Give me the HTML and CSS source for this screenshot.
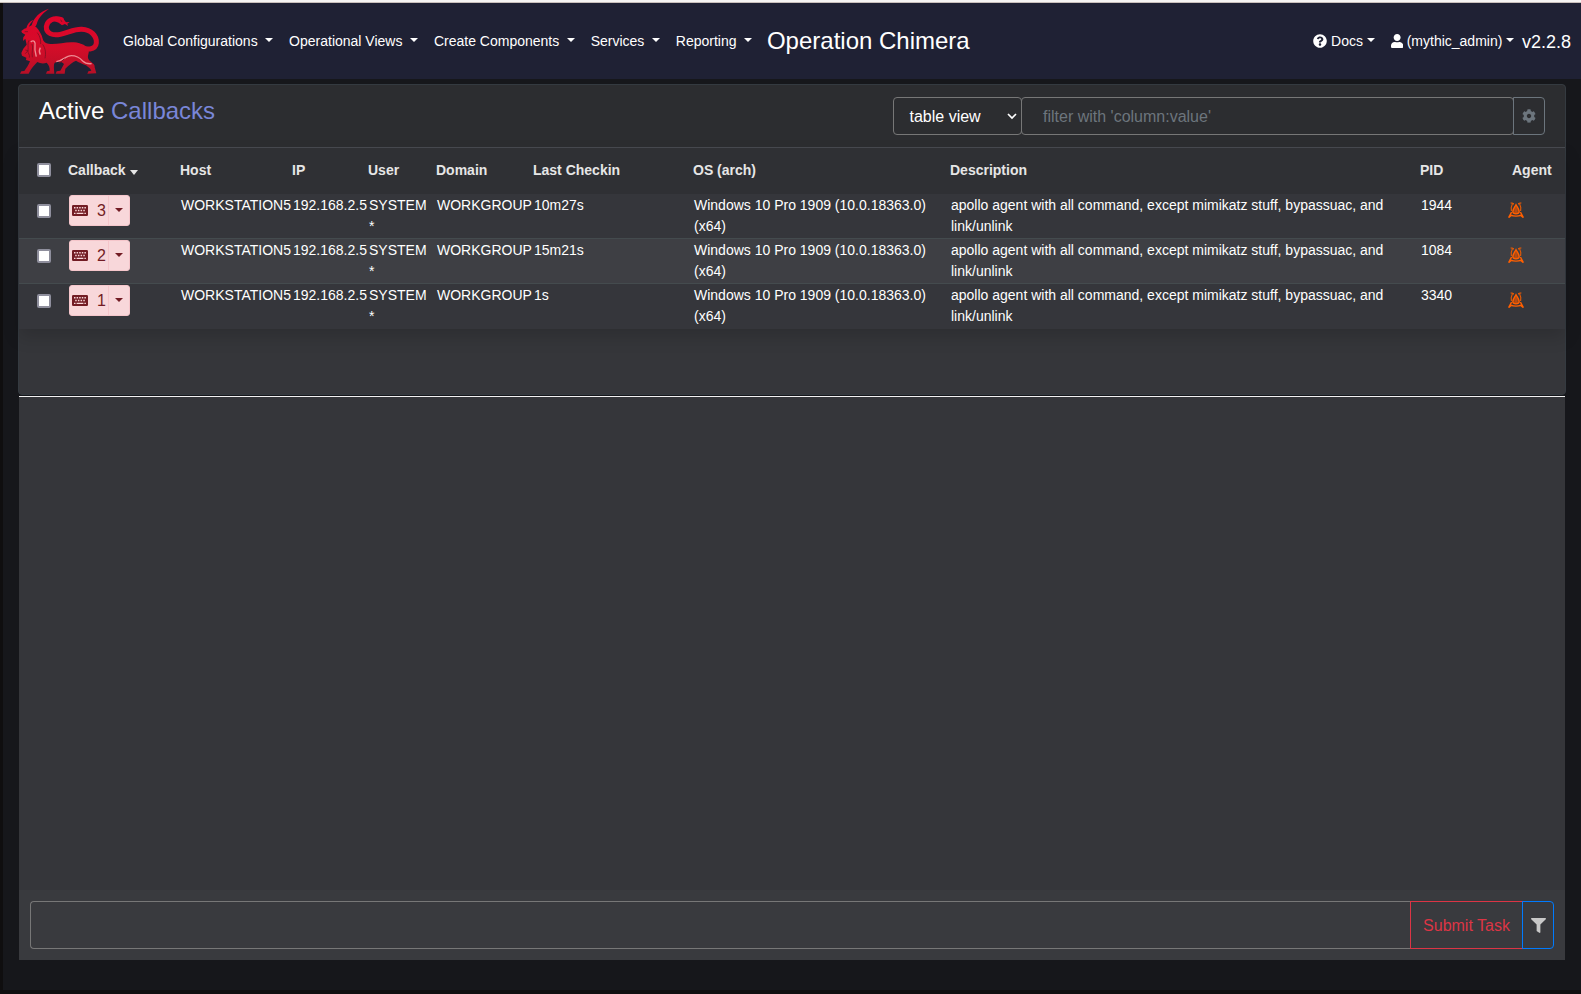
FILE: index.html
```html
<!DOCTYPE html>
<html lang="en">
<head>
<meta charset="utf-8">
<title>Operation Chimera</title>
<link rel="stylesheet" href="styles.css">
</head>
<body>
<svg class="defs" aria-hidden="true">
  <symbol id="keyboard" viewBox="0 0 16 11"><path fill-rule="evenodd" d="M1.2 0h13.6A1.2 1.2 0 0 1 16 1.2v8.6a1.2 1.2 0 0 1-1.200 1.200H1.200A1.200 1.200 0 0 1 0 9.800V1.200A1.200 1.200 0 0 1 1.200 0zM2 2v1.400h1.500V2zM4.600 2v1.400h1.500V2zM7.200 2v1.400h1.500V2zM9.800 2v1.400h1.500V2zM12.400 2v1.400h1.500V2zM3.200 4.800v1.400h1.500V4.800zM5.900 4.800v1.400h1.500V4.800zM8.600 4.800v1.400h1.500V4.800zM11.300 4.800v1.400h1.500V4.800zM2 7.700V9h1.500V7.700zM4.600 7.700V9h6.800V7.700zM12.400 7.700V9h1.500V7.700z"/></symbol>
  <symbol id="apollo" viewBox="0 0 16 16"><path class="lyre-fill" d="M8 3.500L5.300 9l.7 2.500h4l.7-2.500z"/><path class="lyre" d="M8 2.800C6.800 5 5.200 7.200 4.900 9.200 4.800 11 6 11.800 8 11.800s3.200-.8 3.100-2.600C10.800 7.200 9.200 5 8 2.800zM3.600 10L.6 15.600 3.500 13.200M12.400 10l3 5.600-2.900-2.400M3 13.300c2.500 1 7.500 1 10 0"/><path class="lyre-arm" d="M2.600 1h1.600v1.500L3.200 5.500 3.400 9M13.400 1h-1.600v1.500l1 3-.2 3.500M5.400 1v1.500M10.600 1v1.500"/><path class="lyre-thin" d="M8 4v7.500"/></symbol>
</svg>
<div class="page">
  <nav class="navbar">
    <svg class="logo" viewBox="60 24 240 201">
      <defs><linearGradient id="red" gradientUnits="userSpaceOnUse" x1="0" y1="24" x2="0" y2="225"><stop offset="0" stop-color="#e4002b"/><stop offset=".6" stop-color="#d30d29"/><stop offset="1" stop-color="#b50f26"/></linearGradient></defs>
      <path fill="url(#red)" d="M147 26C131 37 117 52 112 66c-2 7-4 13-9 16l-8-6C100 54 120 34 147 26zM100 60C89 64 81 74 79 86l7-2c2-9 7-16 14-24z"/>
      <path fill="url(#red)" d="M80 84L96 75L109 82C118 92 125 104 128 116C131 128 142 132 156 132C178 132 200 125 222 127C244 129 262 138 266 150C268 160 262 166 264 174C266 186 286 188 284 202L289 220L262 221L265 214L274 212C272 206 266 202 258 196C246 190 236 188 228 182C218 186 206 196 196 206L194 221H167L170 214L181 212L192 192C184 184 176 184 164 188C160 194 162 206 163 221H138L141 214L149 212C150 202 146 194 140 188C130 192 120 190 112 186C104 194 94 204 86 221H60L64 214L73 213C80 204 86 194 90 184L78 180L79 173L66 167L64 159L70 146L80 134L76 116L69 123L70 112L76 104L66 98L64 93L73 86z"/>
      <path class="tail" stroke="url(#red)" d="M184 59C162 52 142 60 139 80c-1 20 18 28 42 23 24-5 42-16 64-15 28 1 46 20 44 41-2 20-30 25-56 8"/>
      <path fill="url(#red)" d="M164 51c12-2 22 2 28 8l6 8 11-1-7 5 2 7-9-6-9 4-10-8-14-5z"/>
      <path class="shine" d="M92 126c10-8 15 0 13 12-2 12 2 24 4 32M121 143c-4 7-4 14 0 21M169 185c18-2 28-18 45-18 13 0 27 8 34 16 7 7 16 9 27 8"/>
      <path class="shade" d="M74 95l10 0M76 150l8 2-8 9M87 121c-6 10-1 20-3 29-2 11 7 13 4 23M96 132c5 11-2 25 1 40M112 98c8 10 11 22 10 34M128 133c9 13 10 28 7 42M186 66l-4-7M176 190c8-4 11-8 17-14"/>
    </svg>
    <div class="menu">
      <span class="item">Global Configurations <i class="caret"></i></span>
      <span class="item">Operational Views <i class="caret"></i></span>
      <span class="item">Create Components <i class="caret"></i></span>
      <span class="item">Services <i class="caret"></i></span>
      <span class="item">Reporting <i class="caret"></i></span>
      <span class="operation">Operation Chimera</span>
    </div>
    <div class="account">
      <span class="item"><svg class="fa" width="14" height="14" viewBox="0 0 512 512"><path d="M504 256c0 136.997-111.043 248-248 248S8 392.997 8 256C8 119.083 119.043 8 256 8s248 111.083 248 248zM262.655 90c-54.497 0-89.255 22.957-116.549 63.758-3.536 5.286-2.353 12.415 2.715 16.258l34.699 26.31c5.205 3.947 12.621 3.008 16.665-2.122 17.864-22.658 30.113-35.797 57.303-35.797 20.429 0 45.698 13.148 45.698 32.958 0 14.976-12.363 22.667-32.534 33.976C247.128 238.528 216 254.941 216 296v4c0 6.627 5.373 12 12 12h56c6.627 0 12-5.373 12-12v-1.333c0-28.462 83.186-29.647 83.186-106.667 0-58.002-60.165-102-116.531-102zM256 338c-25.365 0-46 20.635-46 46 0 25.364 20.635 46 46 46s46-20.636 46-46c0-25.365-20.635-46-46-46z"/></svg> Docs<i class="caret"></i></span>
      <span class="item"><svg class="fa" width="12.250" height="14" viewBox="0 0 448 512"><path d="M224 256c70.7 0 128-57.3 128-128S294.7 0 224 0 96 57.3 96 128s57.3 128 128 128zm89.6 32h-16.700c-22.200 10.200-46.900 16-72.900 16s-50.600-5.800-72.900-16h-16.700C60.200 288 0 348.200 0 422.400V464c0 26.500 21.500 48 48 48h352c26.500 0 48-21.500 48-48v-41.600c0-74.200-60.200-134.400-134.400-134.400z"/></svg> (mythic_admin)<i class="caret"></i></span>
      <span class="version">v2.2.8</span>
    </div>
  </nav>

  <main class="content">
    <section class="card">
      <header class="card-head">
        <h1 class="title">Active <span class="accent">Callbacks</span></h1>
        <div class="tools">
          <div class="view">table view<svg width="10" height="7" viewBox="0 0 10 7"><path d="M1 1l4 4 4-4"/></svg></div>
          <div class="search">filter with 'column:value'</div>
          <div class="gear"><svg width="14" height="14" viewBox="0 0 512 512"><path d="M487.4 315.7l-42.6-24.6c4.3-23.2 4.3-47 0-70.2l42.6-24.6c4.9-2.8 7.1-8.6 5.5-14-11.1-35.6-30-67.8-54.7-94.600-3.800-4.100-10-5.100-14.800-2.300L380.800 110c-17.900-15.400-38.500-27.300-60.800-35.100V25.800c0-5.600-3.900-10.500-9.400-11.700-36.700-8.200-74.300-7.800-109.200 0-5.500 1.200-9.400 6.100-9.400 11.700V75c-22.200 7.900-42.800 19.800-60.800 35.100L88.700 85.500c-4.900-2.800-11-1.900-14.800 2.300-24.700 26.700-43.600 58.900-54.700 94.600-1.700 5.400.6 11.200 5.500 14L67.300 221c-4.300 23.200-4.300 47 0 70.200l-42.600 24.600c-4.900 2.800-7.100 8.600-5.500 14 11.100 35.600 30 67.800 54.700 94.600 3.800 4.100 10 5.100 14.800 2.300l42.600-24.600c17.900 15.400 38.500 27.300 60.800 35.100v49.200c0 5.600 3.900 10.500 9.400 11.700 36.700 8.200 74.300 7.800 109.200 0 5.500-1.200 9.400-6.100 9.400-11.700v-49.200c22.200-7.900 42.800-19.800 60.800-35.100l42.600 24.600c4.900 2.800 11 1.900 14.800-2.300 24.700-26.700 43.600-58.900 54.700-94.600 1.500-5.500-.7-11.300-5.600-14.100zM256 336c-44.100 0-80-35.900-80-80s35.900-80 80-80 80 35.900 80 80-35.900 80-80 80z"/></svg></div>
        </div>
      </header>
      <div class="grid">
        <div class="row head">
          <div class="check"><i class="box"></i></div><div>Callback <i class="sort"></i></div><div>Host</div><div>IP</div><div>User</div><div>Domain</div><div>Last Checkin</div><div>OS (arch)</div><div>Description</div><div>PID</div><div class="agent-head">Agent</div>
        </div>
        <div class="row">
          <div class="check"><i class="box"></i></div><div class="cb"><span class="btn"><span class="num"><svg width="16" height="11"><use href="#keyboard"/></svg>3</span><span class="drop"><i class="caret"></i></span></span></div><div>WORKSTATION5</div><div>192.168.2.5</div><div>SYSTEM<br>*</div><div>WORKGROUP</div><div>10m27s</div><div>Windows 10 Pro 1909 (10.0.18363.0) (x64)</div><div class="desc">apollo agent with all command, except mimikatz stuff, bypassuac, and link/unlink</div><div>1944</div><div class="agent"><svg width="16" height="16"><use href="#apollo"/></svg></div>
        </div>
        <div class="row alt">
          <div class="check"><i class="box"></i></div><div class="cb"><span class="btn"><span class="num"><svg width="16" height="11"><use href="#keyboard"/></svg>2</span><span class="drop"><i class="caret"></i></span></span></div><div>WORKSTATION5</div><div>192.168.2.5</div><div>SYSTEM<br>*</div><div>WORKGROUP</div><div>15m21s</div><div>Windows 10 Pro 1909 (10.0.18363.0) (x64)</div><div class="desc">apollo agent with all command, except mimikatz stuff, bypassuac, and link/unlink</div><div>1084</div><div class="agent"><svg width="16" height="16"><use href="#apollo"/></svg></div>
        </div>
        <div class="row last">
          <div class="check"><i class="box"></i></div><div class="cb"><span class="btn"><span class="num"><svg width="16" height="11"><use href="#keyboard"/></svg>1</span><span class="drop"><i class="caret"></i></span></span></div><div>WORKSTATION5</div><div>192.168.2.5</div><div>SYSTEM<br>*</div><div>WORKGROUP</div><div>1s</div><div>Windows 10 Pro 1909 (10.0.18363.0) (x64)</div><div class="desc">apollo agent with all command, except mimikatz stuff, bypassuac, and link/unlink</div><div>3340</div><div class="agent"><svg width="16" height="16"><use href="#apollo"/></svg></div>
        </div>
      </div>
    </section>
    <section class="tasks">
      <div class="task-bar">
        <div class="task-input"></div>
        <div class="submit">Submit Task</div>
        <div class="filter"><svg width="15" height="15" viewBox="0 0 512 512"><path d="M487.976 0H24.028C2.710 0-8.047 25.866 7.058 40.971L192 225.941V432c0 7.831 3.821 15.170 10.237 19.662l80 55.980C298.020 518.690 320 507.493 320 487.980V225.941l184.947-184.970C520.021 25.896 509.338 0 487.976 0z"/></svg></div>
      </div>
    </section>
  </main>
</div>
</body>
</html>
```
FILE: styles.css
```css
* { box-sizing: border-box; }
body {
  margin: 0;
  background: #0f0e0f;
  color: #fff;
  font: 14px/21px "Liberation Sans", Arial, sans-serif;
}
body::before {
  content: "";
  display: block;
  height: 2px;
  background: #f6f4f3;
  border-bottom: 1px solid #c9c0bc;
}
.defs { display: none; }
.page {
  height: 987px;
  margin-left: 3px;
  background: #16171b;
}
.navbar {
  display: flex;
  align-items: center;
  height: 76px;
  padding: 0 10px 0 17px;
  background: #1f2134;
}
.logo { width: 80px; height: 67px; margin-right: 15px; }
.tail { fill: none; stroke-width: 15; stroke-linecap: round; }
.shine { fill: none; stroke: #ee8a92; stroke-width: 4; }
.shade { fill: none; stroke: #7d1024; stroke-width: 2.5; }
.menu, .account { display: flex; align-items: center; white-space: nowrap; }
.account { margin-left: auto; }
.item { padding: 0 8px; }
.operation { padding-left: 7px; font-size: 24px; line-height: 36px; }
.version { font-size: 18px; line-height: 27px; padding-top: 2px; }
.fa { fill: #fff; vertical-align: -2px; }
.caret {
  display: inline-block;
  margin-left: 3.57px;
  vertical-align: 3.57px;
  border: 4.2px solid transparent;
  border-top-color: currentColor;
  border-bottom: 0;
}
.content { padding: 5px 15px 0; }
.card {
  height: 311px;
  border: 1px solid #343a40;
  border-radius: 4px;
  background: #35363a;
}
.card-head {
  display: flex;
  justify-content: space-between;
  height: 63px;
  padding: 12px 20px;
  background: #2c2d30;
  border-bottom: 1px solid #484a50;
  border-radius: 4px 4px 0 0;
}
.title { margin: 0; font-size: 24px; font-weight: 400; line-height: 27px; }
.accent { color: #7986d8; }
.tools { display: flex; height: 38px; font-size: 16px; }
.view, .search, .gear {
  display: flex;
  align-items: center;
  border: 1px solid #777;
  border-radius: 4px;
}
.view { width: 129px; padding: 0 4px 0 15.5px; justify-content: space-between; }
.view svg { fill: none; stroke: #fff; stroke-width: 1.7; }
.search { width: 493px; margin-left: -1px; padding-left: 21px; color: #6c757d; }
.gear {
  width: 32px;
  margin-left: -1px;
  justify-content: center;
  border-color: #6c757d;
  border-radius: 0 4px 4px 0;
}
.gear svg { fill: #6c757d; }
.grid { box-shadow: 0 8px 16px rgba(0, 0, 0, .15); }
.row {
  display: grid;
  grid-template-columns: 49px 112px 112px 76px 68px 97px 160px 257px 470px 88px 1fr;
  height: 45px;
  background: #35363b;
  border-top: 1px solid #444b4e;
}
.row > div { padding: 1px; }
.head {
  height: 46px;
  padding-bottom: 2px;
  align-items: center;
  color: #e6e6e6;
  background: #2f3034;
  font-weight: 700;
  border-top: 0;
}
.head > div { padding: 0; }
.head + .row { height: 44px; border-top: 0; }
.last { height: 46px; }
.alt { background: #3e3f44; }
.row > .check { padding: 10px 0 0 18px; }
.head > .check { padding: 0 0 0 18px; }
.box {
  display: block;
  width: 14px;
  height: 14px;
  background: #fff;
  border: 2px solid #8f8f9d;
  border-radius: 2px;
}
.sort {
  display: inline-block;
  margin-left: 1px;
  border: 4px solid transparent;
  border-top: 5px solid #e6e6e6;
  border-bottom: 0;
}
.btn {
  display: flex;
  width: 61px;
  height: 31px;
  color: #721c24;
  background: #f8d7da;
  border: 1px solid #f5c6cb;
  border-radius: 3px;
}
.num { display: flex; align-items: center; width: 38px; padding-left: 2px; gap: 9px; font-size: 16px; }
.num svg { fill: #721c24; }
.drop { flex: 1; border-left: 1px solid #f5c6cb; padding-left: 2px; line-height: 30px; }
.desc { padding-right: 30px; }
.row > .agent { padding: 8px 0 0; }
.row > .agent-head { padding-left: 4px; }
.lyre { fill: none; stroke: #ff5f00; stroke-width: 1.5; }
.lyre-arm { fill: none; stroke: #e65a05; stroke-width: 1.1; }
.lyre-fill { fill: #9c4519; }
.lyre-thin { fill: none; stroke: #d95808; stroke-width: .8; }
.tasks {
  display: flex;
  align-items: flex-end;
  height: 564px;
  margin: 1px 1px 0;
  border-top: 1px solid #f2f2f2;
  background: #35363a;
}
.task-bar {
  display: flex;
  flex: 1;
  height: 70px;
  padding: 11px;
  background: #393a3e;
}
.task-input { flex: 1; border: 1px solid #777; border-right: 0; border-radius: 4px 0 0 4px; }
.submit {
  width: 113px;
  border: 1px solid #dc3545;
  color: #dc3545;
  font-size: 16px;
  line-height: 47px;
  text-align: center;
}
.filter {
  display: flex;
  align-items: center;
  justify-content: center;
  width: 32px;
  margin-left: -1px;
  border: 1px solid #007bff;
  border-radius: 0 4px 4px 0;
}
.filter svg { fill: #c8c8c8; }
```
